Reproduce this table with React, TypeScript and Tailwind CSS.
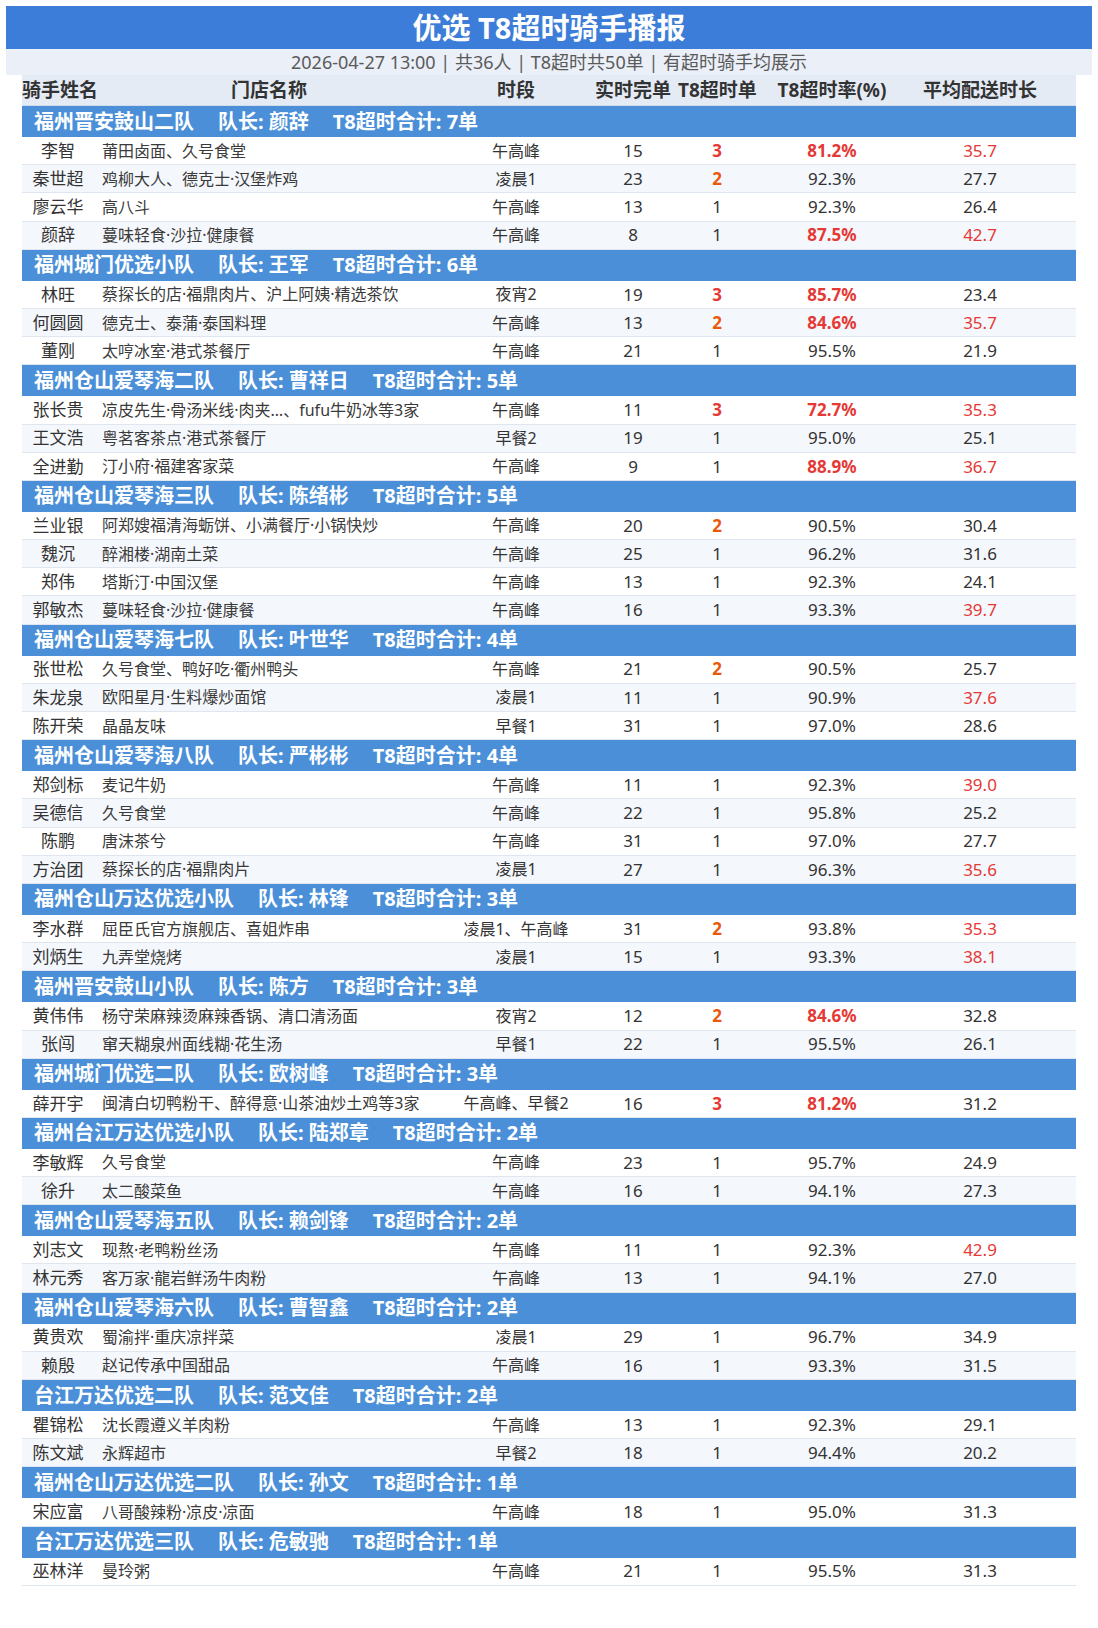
import React from 'react'

interface Rider {
  name: string
  store: string
  slot: string
  done: number
  late: number
  rate: string
  avg: string
}

interface Team {
  team: string
  leader: string
  total: number
  riders: Rider[]
}

const r = (name: string, store: string, slot: string, done: number, late: number, rate: string, avg: string): Rider => ({
  name, store, slot, done, late, rate, avg,
})

const teams: Team[] = [
  {
    team: '福州晋安鼓山二队', leader: '颜辞', total: 7, riders: [
      r('李智', '莆田卤面、久号食堂', '午高峰', 15, 3, '81.2', '35.7'),
      r('秦世超', '鸡柳大人、德克士·汉堡炸鸡', '凌晨1', 23, 2, '92.3', '27.7'),
      r('廖云华', '高八斗', '午高峰', 13, 1, '92.3', '26.4'),
      r('颜辞', '蔓味轻食·沙拉·健康餐', '午高峰', 8, 1, '87.5', '42.7'),
    ],
  },
  {
    team: '福州城门优选小队', leader: '王军', total: 6, riders: [
      r('林旺', '蔡探长的店·福鼎肉片、沪上阿姨·精选茶饮', '夜宵2', 19, 3, '85.7', '23.4'),
      r('何圆圆', '德克士、泰蒲·泰国料理', '午高峰', 13, 2, '84.6', '35.7'),
      r('董刚', '太哼冰室·港式茶餐厅', '午高峰', 21, 1, '95.5', '21.9'),
    ],
  },
  {
    team: '福州仓山爱琴海二队', leader: '曹祥日', total: 5, riders: [
      r('张长贵', '凉皮先生·骨汤米线·肉夹…、fufu牛奶冰等3家', '午高峰', 11, 3, '72.7', '35.3'),
      r('王文浩', '粤茗客茶点·港式茶餐厅', '早餐2', 19, 1, '95.0', '25.1'),
      r('全进勤', '汀小府·福建客家菜', '午高峰', 9, 1, '88.9', '36.7'),
    ],
  },
  {
    team: '福州仓山爱琴海三队', leader: '陈绪彬', total: 5, riders: [
      r('兰业银', '阿郑嫂福清海蛎饼、小满餐厅·小锅快炒', '午高峰', 20, 2, '90.5', '30.4'),
      r('魏沉', '醉湘楼·湖南土菜', '午高峰', 25, 1, '96.2', '31.6'),
      r('郑伟', '塔斯汀·中国汉堡', '午高峰', 13, 1, '92.3', '24.1'),
      r('郭敏杰', '蔓味轻食·沙拉·健康餐', '午高峰', 16, 1, '93.3', '39.7'),
    ],
  },
  {
    team: '福州仓山爱琴海七队', leader: '叶世华', total: 4, riders: [
      r('张世松', '久号食堂、鸭好吃·衢州鸭头', '午高峰', 21, 2, '90.5', '25.7'),
      r('朱龙泉', '欧阳星月·生料爆炒面馆', '凌晨1', 11, 1, '90.9', '37.6'),
      r('陈开荣', '晶晶友味', '早餐1', 31, 1, '97.0', '28.6'),
    ],
  },
  {
    team: '福州仓山爱琴海八队', leader: '严彬彬', total: 4, riders: [
      r('郑剑标', '麦记牛奶', '午高峰', 11, 1, '92.3', '39.0'),
      r('吴德信', '久号食堂', '午高峰', 22, 1, '95.8', '25.2'),
      r('陈鹏', '唐沫茶兮', '午高峰', 31, 1, '97.0', '27.7'),
      r('方治团', '蔡探长的店·福鼎肉片', '凌晨1', 27, 1, '96.3', '35.6'),
    ],
  },
  {
    team: '福州仓山万达优选小队', leader: '林锋', total: 3, riders: [
      r('李水群', '屈臣氏官方旗舰店、喜姐炸串', '凌晨1、午高峰', 31, 2, '93.8', '35.3'),
      r('刘炳生', '九弄堂烧烤', '凌晨1', 15, 1, '93.3', '38.1'),
    ],
  },
  {
    team: '福州晋安鼓山小队', leader: '陈方', total: 3, riders: [
      r('黄伟伟', '杨守荣麻辣烫麻辣香锅、清口清汤面', '夜宵2', 12, 2, '84.6', '32.8'),
      r('张闯', '窜天糊泉州面线糊·花生汤', '早餐1', 22, 1, '95.5', '26.1'),
    ],
  },
  {
    team: '福州城门优选二队', leader: '欧树峰', total: 3, riders: [
      r('薛开宇', '闽清白切鸭粉干、醉得意·山茶油炒土鸡等3家', '午高峰、早餐2', 16, 3, '81.2', '31.2'),
    ],
  },
  {
    team: '福州台江万达优选小队', leader: '陆郑章', total: 2, riders: [
      r('李敏辉', '久号食堂', '午高峰', 23, 1, '95.7', '24.9'),
      r('徐升', '太二酸菜鱼', '午高峰', 16, 1, '94.1', '27.3'),
    ],
  },
  {
    team: '福州仓山爱琴海五队', leader: '赖剑锋', total: 2, riders: [
      r('刘志文', '现熬·老鸭粉丝汤', '午高峰', 11, 1, '92.3', '42.9'),
      r('林元秀', '客万家·龍岩鲜汤牛肉粉', '午高峰', 13, 1, '94.1', '27.0'),
    ],
  },
  {
    team: '福州仓山爱琴海六队', leader: '曹智鑫', total: 2, riders: [
      r('黄贵欢', '蜀渝拌·重庆凉拌菜', '凌晨1', 29, 1, '96.7', '34.9'),
      r('赖殷', '赵记传承中国甜品', '午高峰', 16, 1, '93.3', '31.5'),
    ],
  },
  {
    team: '台江万达优选二队', leader: '范文佳', total: 2, riders: [
      r('瞿锦松', '沈长霞遵义羊肉粉', '午高峰', 13, 1, '92.3', '29.1'),
      r('陈文斌', '永辉超市', '早餐2', 18, 1, '94.4', '20.2'),
    ],
  },
  {
    team: '福州仓山万达优选二队', leader: '孙文', total: 1, riders: [
      r('宋应富', '八哥酸辣粉·凉皮·凉面', '午高峰', 18, 1, '95.0', '31.3'),
    ],
  },
  {
    team: '台江万达优选三队', leader: '危敏驰', total: 1, riders: [
      r('巫林洋', '曼玲粥', '午高峰', 21, 1, '95.5', '31.3'),
    ],
  },
]

const cols = 'grid grid-cols-[72px_350px_144px_90px_78px_152px_144px_1fr]'

function lateClass(n: number) {
  if (n >= 3) return 'font-bold text-[#e53935]'
  if (n === 2) return 'font-bold text-[#e8590c]'
  return 'text-[#333]'
}

export default function App() {
  return (
    <div className="w-[1098px] min-h-[1628px] bg-white pt-[6px] px-[6px] font-['Noto_Sans','Noto_Sans_CJK_SC',sans-serif] text-[#333]">
      {/* Title */}
      <div className="h-[43px] bg-[#3b7dd8] flex items-center justify-center text-white text-[29px] font-bold">
        优选 T8超时骑手播报
      </div>
      <div className="h-[26px] bg-[#eaeff8] flex items-center justify-center text-[18px] text-[#5a5a5a]">
        2026-04-27 13:00 | 共36人 | T8超时共50单 | 有超时骑手均展示
      </div>

      {/* Table */}
      <div className="pl-[16px] pr-[16px]">
        <div className={`${cols} h-[31px] items-center bg-[#e4ebf5] border-b border-[#d3dcea] text-[19px] font-bold text-[#333] text-center`}>
          <div className="whitespace-nowrap">骑手姓名</div>
          <div>门店名称</div>
          <div>时段</div>
          <div className="whitespace-nowrap">实时完单</div>
          <div className="whitespace-nowrap">T8超时单</div>
          <div className="whitespace-nowrap">T8超时率(%)</div>
          <div>平均配送时长</div>
          <div />
        </div>

        {teams.map((t) => (
          <div key={t.team}>
            <div className="h-[31px] bg-[#4a8fd8] flex items-center pl-[12px] text-white text-[20px] font-bold gap-[24px] whitespace-nowrap">
              <span>{t.team}</span>
              <span>队长: {t.leader}</span>
              <span>T8超时合计: {t.total}单</span>
            </div>
            {t.riders.map((d, i) => {
              const rateLow = parseFloat(d.rate) < 90
              const avgHigh = parseFloat(d.avg) > 35
              return (
                <div
                  key={d.name}
                  className={`${cols} h-[28.2px] items-center border-b border-[#dfe6f0] text-[16px] ${i % 2 === 1 ? 'bg-[#f4f7fc]' : 'bg-white'}`}
                >
                  <div className="text-center text-[17px] whitespace-nowrap">{d.name}</div>
                  <div className="pl-2 whitespace-nowrap text-[#3a3a3a]">{d.store}</div>
                  <div className="text-center whitespace-nowrap">{d.slot}</div>
                  <div className="text-center text-[17px]">{d.done}</div>
                  <div className={`text-center text-[17px] ${lateClass(d.late)}`}>{d.late}</div>
                  <div className={`text-center text-[17px] ${rateLow ? 'font-bold text-[#e53935]' : ''}`}>{d.rate}%</div>
                  <div className={`text-center text-[17px] ${avgHigh ? 'text-[#e53935]' : ''}`}>{d.avg}</div>
                  <div />
                </div>
              )
            })}
          </div>
        ))}
      </div>
    </div>
  )
}
